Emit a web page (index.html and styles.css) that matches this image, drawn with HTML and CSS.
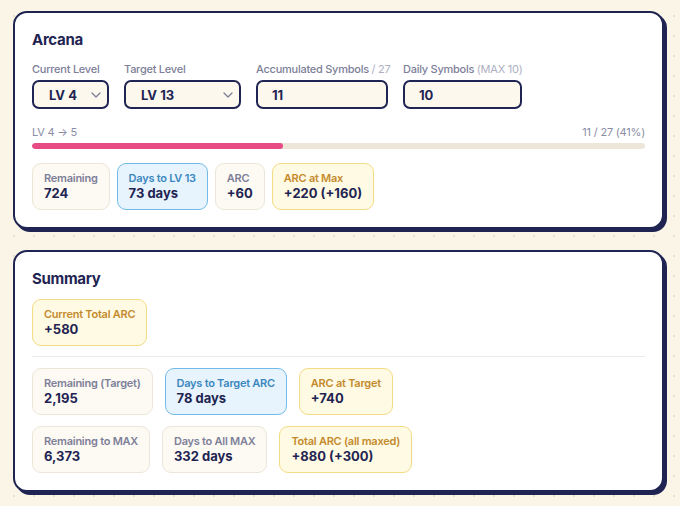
FILE: index.html
```html
<!DOCTYPE html>
<html lang="en">
<head>
  <meta charset="UTF-8" />
  <meta name="viewport" content="width=device-width, initial-scale=1.0"/>
  <title>Arcana Calculator</title>
  <link rel="stylesheet" href="styles.css">
</head>
<body>
  <section class="card">
    <h2>Arcana</h2>
    <div class="fields">
      <div class="field w-cur">
        <label>Current Level</label>
        <div class="select">
          <span>LV 4</span>
          <svg width="10" height="6" viewBox="0 0 10 6"><path d="M1 1l4 4 4-4" fill="none" stroke="#7d8099" stroke-width="1.3" stroke-linecap="round" stroke-linejoin="round"/></svg>
        </div>
      </div>
      <div class="field w-tgt">
        <label>Target Level</label>
        <div class="select">
          <span>LV 13</span>
          <svg width="10" height="6" viewBox="0 0 10 6"><path d="M1 1l4 4 4-4" fill="none" stroke="#7d8099" stroke-width="1.3" stroke-linecap="round" stroke-linejoin="round"/></svg>
        </div>
      </div>
      <div class="field w-acc">
        <label>Accumulated Symbols <span class="muted">/ 27</span></label>
        <input class="input" value="11" />
      </div>
      <div class="field w-day">
        <label>Daily Symbols <span class="muted">(MAX 10)</span></label>
        <input class="input" value="10" />
      </div>
    </div>

    <div class="progress-head">
      <span>LV 4 → 5</span>
      <span>11 / 27 (41%)</span>
    </div>
    <div class="bar"><div class="fill" style="width: 41%"></div></div>

    <div class="chips">
      <div class="chip"><div class="k">Remaining</div><div class="v">724</div></div>
      <div class="chip blue"><div class="k">Days to LV 13</div><div class="v">73 days</div></div>
      <div class="chip"><div class="k">ARC</div><div class="v">+60</div></div>
      <div class="chip gold"><div class="k">ARC at Max</div><div class="v">+220 (+160)</div></div>
    </div>
  </section>

  <section class="card">
    <h2>Summary</h2>
    <div class="chips wide first">
      <div class="chip gold"><div class="k">Current Total ARC</div><div class="v">+580</div></div>
    </div>
    <hr />
    <div class="chips wide">
      <div class="chip"><div class="k">Remaining (Target)</div><div class="v">2,195</div></div>
      <div class="chip blue"><div class="k">Days to Target ARC</div><div class="v">78 days</div></div>
      <div class="chip gold"><div class="k">ARC at Target</div><div class="v">+740</div></div>
    </div>
    <div class="chips wide">
      <div class="chip"><div class="k">Remaining to MAX</div><div class="v">6,373</div></div>
      <div class="chip"><div class="k">Days to All MAX</div><div class="v">332 days</div></div>
      <div class="chip gold"><div class="k">Total ARC (all maxed)</div><div class="v">+880 (+300)</div></div>
    </div>
  </section>
</body>
</html>
```

FILE: styles.css
```css
* { box-sizing: border-box; margin: 0; padding: 0; }
body {
  font-family: 'Inter', 'Noto Sans', sans-serif;
  color: #1f2452;
  background-color: #fbf5e7;
  background-image: radial-gradient(circle, #e9e0cc 1px, transparent 1.2px);
  background-size: 20px 20px;
  background-position: 4px 6px;
  padding: 11px 16px 12px 13px;
  display: flex;
  flex-direction: column;
  gap: 21px;
}
.card {
  background: #fff;
  border: 2px solid #1f2452;
  border-radius: 14px;
  box-shadow: 3px 3px 0 #1f2452;
  padding: 17px;
}
h2 {
  font-size: 15px;
  font-weight: 700;
  line-height: 20px;
  letter-spacing: -0.3px;
  color: #1f2452;
}

/* inputs row */
.fields {
  display: flex;
  gap: 15px;
  margin-top: 12px;
}
.field label {
  display: block;
  font-size: 11px;
  font-weight: 500;
  line-height: 15px;
  letter-spacing: -0.25px;
  color: #7d8099;
  margin-bottom: 3px;
  white-space: nowrap;
}
.field .muted { color: #aeb0c2; font-weight: 400; }
.w-cur { width: 77px; }
.w-tgt { width: 117px; }
.w-acc { width: 132px; }
.w-day { width: 119px; }
.select, .input {
  height: 29px;
  width: 100%;
  border: 2px solid #1f2452;
  border-radius: 7px;
  background: #fdf8ee;
  font-family: inherit;
  font-size: 13px;
  font-weight: 700;
  color: #1f2452;
}
.select {
  display: flex;
  align-items: center;
  justify-content: space-between;
  padding: 0 6px 0 15px;
}
.input {
  padding: 0 14px;
  outline: none;
}

/* progress */
.progress-head {
  display: flex;
  justify-content: space-between;
  font-size: 11px;
  line-height: 15px;
  letter-spacing: -0.2px;
  color: #8a8da4;
  margin-top: 16px;
}
.bar {
  height: 6px;
  margin-top: 3px;
  background: #ede7da;
  border-radius: 3px;
  overflow: hidden;
}
.fill {
  height: 100%;
  background: #e84a86;
  border-radius: 3px;
}

/* stat chips */
.chips {
  display: flex;
  gap: 7px;
  margin-top: 14px;
}
.chips.wide { gap: 12px; margin-top: 11px; }
.chips.wide.first { margin-top: 10px; }
.chip {
  background: #fdfaf3;
  border: 1.5px solid #ece6d8;
  border-radius: 9px;
  padding: 7px 11px 8px;
}
.chip .k {
  font-size: 11px;
  font-weight: 600;
  line-height: 14px;
  letter-spacing: -0.25px;
  color: #7d8099;
  white-space: nowrap;
}
.chip .v {
  font-size: 13px;
  font-weight: 700;
  line-height: 16px;
  white-space: nowrap;
  color: #1f2452;
}
.chip.blue {
  background: #e7f4fd;
  border-color: #72bbe8;
}
.chip.blue .k { color: #3b87bd; }
.chip.gold {
  background: #fffae3;
  border-color: #f4dc84;
}
.chip.gold .k { color: #c48a2e; }
hr {
  border: none;
  border-top: 1px solid #eeebe6;
  margin-top: 10px;
}
```
